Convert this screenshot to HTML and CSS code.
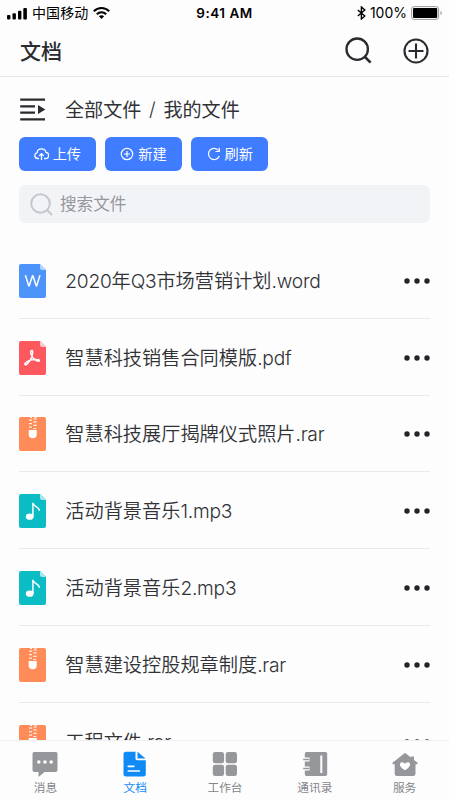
FILE: index.html
```html
<!DOCTYPE html>
<html lang="zh-CN">
<head>
<meta charset="utf-8">
<meta name="viewport" content="width=device-width, initial-scale=1">
<title>文档</title>
<link rel="stylesheet" href="styles.css">
</head>
<body>
<svg width="0" height="0" class="defs" aria-hidden="true">
  <symbol id="rar" viewBox="0 0 27 34">
    <rect width="27" height="34" rx="2" fill="#ff8c58"/>
    <g fill="#fff"><path d="M11 0h2v1h-2zM15.500 0h2v1h-2zM10 2.500h3v1.300h-3zM14.300 1.500h3.500v1h-3.500zM10 6h3v1.300h-3zM14.300 4.200h3.500v1.200h-3.500zM10 9.500h3v1.200h-3zM14.300 7.800h3.500v1.200h-3.500zM14.300 11h3v1h-3z" opacity=".85"/><path d="M9.700 13h8v4.500a4 3.800 0 0 1-8 0z"/></g>
  </symbol>
  <symbol id="mp3" viewBox="0 0 27 34">
    <path d="M2 0h19l6 6v26a2 2 0 0 1-2 2H2a2 2 0 0 1-2-2V2a2 2 0 0 1 2-2z" fill="#0cbcc4"/>
    <path d="M21 0l6 6h-4a2 2 0 0 1-2-2z" fill="#a9e6e9"/>
    <ellipse cx="10.700" cy="22.700" rx="3.900" ry="3.100" fill="#fff"/><path d="M13.900 22.700V8.800c.5 4.300 6.300 3.300 6.500 8" fill="none" stroke="#fff" stroke-width="1.500"/>
  </symbol>
  <symbol id="dots" viewBox="0 0 26 6"><g fill="#222427"><circle cx="3" cy="3" r="2.700"/><circle cx="13" cy="3" r="2.700"/><circle cx="23" cy="3" r="2.700"/></g></symbol>
</svg>
<div class="app">
  <div class="status">
    <div class="carrier">
      <svg width="21" height="13" viewBox="0 0 21 13"><rect x="0" y="8" width="3.400" height="4.500" rx="1"/><rect x="5.500" y="6.200" width="3.400" height="6.300" rx="1"/><rect x="11" y="3.700" width="3.400" height="8.800" rx="1"/><rect x="16.300" y="1" width="3.600" height="11.500" rx="1"/></svg>
      <span>中国移动</span>
      <svg class="wifi" width="17" height="12" viewBox="0 0 17 12" fill="none" stroke="#000" stroke-width="2"><path d="M.8 4.300C5-.1 12-.1 16.200 4.300M3.800 7.300c2.700-2.700 6.700-2.700 9.400 0"/><path d="M5.900 9.300c1.500-1.400 3.700-1.400 5.200 0L8.500 12z" fill="#000" stroke="none"/></svg>
    </div>
    <div class="clock">9:41 AM</div>
    <div class="power">
      <svg width="9" height="14" viewBox="0 0 9 14" fill="none" stroke="#000" stroke-width="1.400"><path d="M.8 4l7 6L4.400 13V1l3.400 3-7 6"/></svg>
      <span>100%</span>
      <svg width="32" height="14" viewBox="0 0 32 14"><rect x=".6" y=".6" width="27" height="12.800" rx="2.500" fill="none" stroke="#999"/><rect x="2" y="2" width="24.200" height="10" rx="1"/><path d="M29.500 5c1.700.5 1.700 3.500 0 4z" fill="#999"/></svg>
    </div>
  </div>
  <header class="header">
    <h1>文档</h1>
    <div class="actions">
      <svg width="27" height="27" viewBox="0 0 27 27" fill="none" stroke="#292b2e" stroke-width="2.300"><circle cx="12.200" cy="12.200" r="10.700"/><path d="M20 20l5.600 5.600" stroke-width="2.600"/></svg>
      <svg width="26" height="26" viewBox="0 0 26 26" fill="none" stroke="#292b2e" stroke-width="2.100"><circle cx="13" cy="13" r="11.500"/><path d="M5.500 13h15M13 5.500v15"/></svg>
    </div>
  </header>
  <main class="main">
    <nav class="crumbs">
      <svg width="26" height="23" viewBox="0 0 26 23" fill="none" stroke="#292b2e" stroke-width="2.200"><path d="M.2 1.600h24.800M.2 8.300h14.800M.2 14.700h14.800M.2 21.300h24.800"/><path d="M18 7l7.300 4.500-7.300 4.500z" fill="#292b2e" stroke="none"/></svg>
      <span>全部文件</span><span class="slash">/</span><span>我的文件</span>
    </nav>
    <div class="buttons">
      <button><svg width="15" height="14" viewBox="0 0 15 14" fill="none" stroke="#fff" stroke-width="1.300"><path d="M5 11.500H3.800a3 3 0 0 1-.7-5.900C3.500 .9 11 .7 11.900 5.300a3.100 3.100 0 0 1-.7 6.200H10M7.500 13V7M5.200 8.900l2.300-2.200 2.300 2.200"/></svg><span>上传</span></button>
      <button><svg width="14" height="14" viewBox="0 0 14 14" fill="none" stroke="#fff" stroke-width="1.200"><circle cx="7" cy="7" r="5.700"/><path d="M4 7h6M7 4v6"/></svg><span>新建</span></button>
      <button><svg width="14" height="14" viewBox="0 0 14 14" fill="none" stroke="#fff" stroke-width="1.200"><path d="M12.300 9A5.600 5.600 0 1 1 11.500 3.500M12.300.8v3.700H8.500"/></svg><span>刷新</span></button>
    </div>
    <div class="search">
      <svg width="23" height="23" viewBox="0 0 23 23" fill="none" stroke="#c6c7cb" stroke-width="2"><circle cx="10.500" cy="10.500" r="9.300"/><path d="M17 17l5 5"/></svg>
      <span>搜索文件</span>
    </div>
    <ul class="files">
      <li>
        <svg class="type" viewBox="0 0 27 34"><path d="M2 0h19l6 6v26a2 2 0 0 1-2 2H2a2 2 0 0 1-2-2V2a2 2 0 0 1 2-2z" fill="#4c93fa"/><path d="M21 0l6 6h-4a2 2 0 0 1-2-2z" fill="#b8d5ff"/><path d="M6.400 11.300l3.400 10.800h.3l3.400-10.300h.4l3.400 10.300h.3l3.400-10.800" fill="none" stroke="#fff" stroke-width="1.500" stroke-linejoin="bevel"/></svg>
        <span class="name"><i>2020</i>年<i>Q3</i>市场营销计划<i>.word</i></span><svg class="more"><use href="#dots"/></svg>
      </li>
      <li>
        <svg class="type" viewBox="0 0 27 34"><path d="M2 0h19l6 6v26a2 2 0 0 1-2 2H2a2 2 0 0 1-2-2V2a2 2 0 0 1 2-2z" fill="#fc585d"/><path d="M21 0l6 6h-4a2 2 0 0 1-2-2z" fill="#ffc8c5"/><path d="M12.800 9.600c-2.500.3-.3 5 1.100 7.100 1.500 2.500 5.700 4.300 6.500 3 .7-1.600-6.500-1.600-9.700-.3-3 1-5.500 3.200-4.700 4.100 1.300 1.500 4.800-3.200 6.400-6.800 1.200-3 2-7.100.4-7.100z" fill="none" stroke="#fff" stroke-width="1.500"/></svg>
        <span class="name">智慧科技销售合同模版<i>.pdf</i></span><svg class="more"><use href="#dots"/></svg>
      </li>
      <li><svg class="type"><use href="#rar"/></svg><span class="name">智慧科技展厅揭牌仪式照片<i>.rar</i></span><svg class="more"><use href="#dots"/></svg></li>
      <li><svg class="type"><use href="#mp3"/></svg><span class="name">活动背景音乐<i>1.mp3</i></span><svg class="more"><use href="#dots"/></svg></li>
      <li><svg class="type"><use href="#mp3"/></svg><span class="name">活动背景音乐<i>2.mp3</i></span><svg class="more"><use href="#dots"/></svg></li>
      <li><svg class="type"><use href="#rar"/></svg><span class="name">智慧建设控股规章制度<i>.rar</i></span><svg class="more"><use href="#dots"/></svg></li>
      <li><svg class="type"><use href="#rar"/></svg><span class="name">工程文件<i>.rar</i></span><svg class="more"><use href="#dots"/></svg></li>
    </ul>
  </main>
  <nav class="tabs">
    <a><svg viewBox="0 0 26 26"><path d="M2 1h22a1.500 1.500 0 0 1 1.500 1.500V19a2 2 0 0 1-2 2H12.500L6.500 26v-5H2.500a2 2 0 0 1-2-2V2.500A1.500 1.500 0 0 1 2 1z"/><g fill="#fff"><circle cx="6.800" cy="11" r="1.800"/><circle cx="13" cy="11" r="1.800"/><circle cx="19.200" cy="11" r="1.800"/></g></svg><span>消息</span></a>
    <a class="active"><svg viewBox="0 0 26 26"><path d="M4 .7h9.500v6.800c0 1 .7 1.700 1.700 1.700h8.600V23a2.500 2.500 0 0 1-2.500 2.500H4A2.500 2.500 0 0 1 1.500 23V3.200A2.500 2.500 0 0 1 4 .7z"/><path d="M15.500.7l8 6.700h-8z"/><path d="M6.300 15.300h5.500M6.300 20h11" stroke="#fff" stroke-width="1.700" stroke-linecap="round"/></svg><span>文档</span></a>
    <a><svg viewBox="0 0 26 26"><rect x=".8" y="1" width="11.300" height="11.300" rx="2.400"/><rect x="13.700" y="1" width="11.300" height="11.300" rx="2.400"/><rect x=".8" y="13.800" width="11.300" height="11.300" rx="2.400"/><rect x="13.700" y="13.800" width="11.300" height="11.300" rx="2.400"/></svg><span>工作台</span></a>
    <a><svg viewBox="0 0 26 26"><path d="M4.500 1h19a1.700 1.700 0 0 1 1.700 1.700v20.600a1.700 1.700 0 0 1-1.700 1.700h-19a1.700 1.700 0 0 1-1.700-1.700V2.700A1.700 1.700 0 0 1 4.500 1z"/><path d="M1.500 8.500h6M1.500 17.500h6" stroke="#fff" stroke-width="4"/><path d="M1.200 8.500h6M1.200 17.500h6" stroke="#96979b" stroke-width="1.600"/><path d="M19.300 4.500v17.500" stroke="#fff" stroke-width="2"/></svg><span>通讯录</span></a>
    <a><svg viewBox="0 0 26 26"><path d="M12.200 2.400a1.200 1.200 0 0 1 1.600 0l5.200 4V5.600h3v3.400l3.300 2.600a.9.900 0 0 1-.5 1.600h-1.300v9.500a2.300 2.300 0 0 1-2.300 2.300H5a2.300 2.300 0 0 1-2.300-2.300v-9.500H1.300a.9.900 0 0 1-.5-1.600z"/><path d="M13 19.300C5.800 15.200 7.700 11.300 10 11.300c1.500 0 2.500.8 3 1.700.5-.9 1.500-1.700 3-1.700 2.300 0 4.200 3.900-3 8z" fill="#fff"/></svg><span>服务</span></a>
  </nav>
</div>
</body>
</html>
```
FILE: styles.css
```css
* { box-sizing: border-box; }
body {
  margin: 0;
  background: #fdfdfe;
  color: #313235;
  font-family: Inter, "Noto Sans CJK SC", sans-serif;
}
svg { display: block; flex: none; }
i { font-style: normal; }
.defs { position: absolute; }
.app { height: 800px; display: flex; flex-direction: column; overflow: hidden; }

.status {
  height: 26px;
  flex: none;
  display: grid;
  grid-template-columns: 1fr auto 1fr;
  align-items: center;
  padding: 0 6px 0 7px;
  color: #000;
  font-size: 14px;
  line-height: 20px;
}
.carrier, .power { display: flex; align-items: center; }
.carrier span { margin: 0 5px 0 4px; letter-spacing: .1px; padding-bottom: 1px; }
.clock { font-size: 13.5px; font-weight: 600; letter-spacing: .5px; padding-right: 1px; }
.power { justify-content: flex-end; gap: 4px; }

.header {
  height: 51px;
  flex: none;
  display: flex;
  justify-content: space-between;
  align-items: center;
  padding: 0 20px 1px;
  border-bottom: 1px solid #e4e5e7;
}
h1 { margin: 0; padding-top: 2px; font-size: 21px; line-height: 30px; font-weight: 500; color: #292b2e; }
.actions { display: flex; align-items: center; gap: 31px; }

.main { flex: 1; min-height: 0; overflow: hidden; padding: 0 19px; }
.crumbs { display: flex; align-items: center; height: 60px; padding-top: 5px; font-size: 19.1px; }
.crumbs svg { margin: 0 19px 0 1px; }
.crumbs span { padding-bottom: 2px; }
.crumbs .slash { margin: 0 7px; width: 8px; text-align: center; font-weight: 300; }
.buttons { display: flex; gap: 9.5px; }
button {
  width: 76.7px;
  height: 34px;
  padding: 0;
  border: 0;
  border-radius: 6px;
  background: #407cff;
  color: #fff;
  font: 14.2px/20px "Noto Sans CJK SC", sans-serif;
  display: flex;
  align-items: center;
  justify-content: center;
  gap: 4px;
}
button span { padding-bottom: 2px; }
.search {
  height: 38px;
  margin-top: 14px;
  padding-left: 11px;
  border-radius: 6px;
  background: #f2f3f7;
  display: flex;
  align-items: center;
  gap: 7px;
  color: #96979b;
  font-size: 16.6px;
  line-height: 24px;
}
.files { list-style: none; margin: 19px 0 0; padding: 0; }
.files li {
  height: 76.8px;
  display: flex;
  align-items: center;
  padding-top: 2px;
  border-bottom: 1px solid #e8e9eb;
}
.type { width: 27px; height: 34px; }
.name { flex: 1; margin-left: 19.3px; font-size: 19.2px; line-height: 28px; font-weight: 350; white-space: nowrap; }
.name i { letter-spacing: -.25px; }
.more { width: 26px; height: 6px; }

.tabs {
  height: 60px;
  flex: none;
  display: grid;
  grid-template-columns: repeat(5, 1fr);
  border-top: 1px solid #eeeff1;
  background: #fdfdfe;
}
.tabs a {
  display: flex;
  flex-direction: column;
  align-items: center;
  padding: 10px 0 0 1px;
  color: #85868a;
  font-size: 11.7px;
  line-height: 17px;
}
.tabs svg { width: 26px; height: 26px; fill: #96979b; }
.tabs span { margin-top: 3px; }
.tabs .active { color: #108bf5; }
.tabs .active svg { fill: #108bf5; }
```
